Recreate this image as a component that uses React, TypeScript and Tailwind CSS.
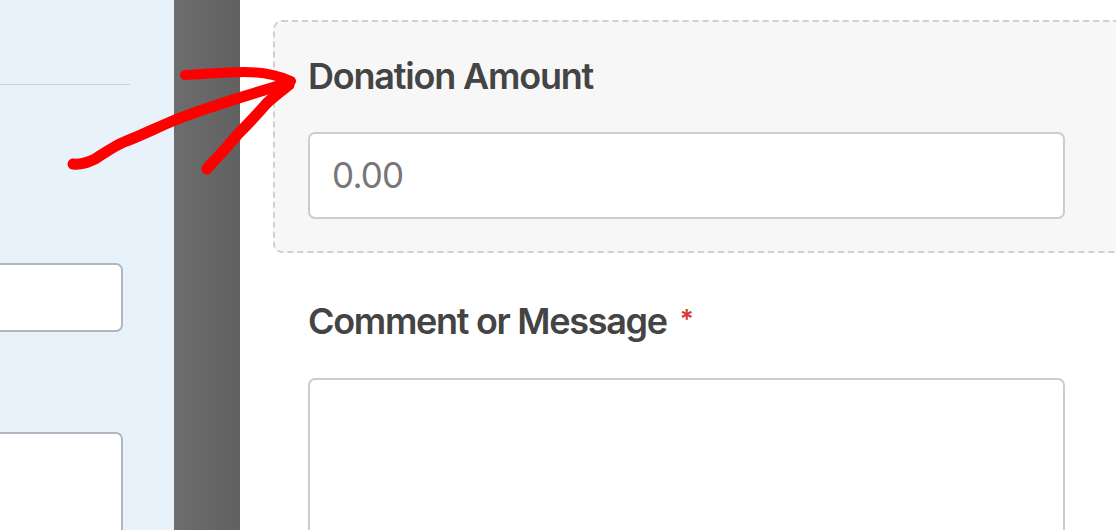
import React from "react";

export default function App() {
  return (
    <div className="relative flex h-[530px] w-[1116px] overflow-hidden bg-white" style={{ fontFamily: "Inter, 'Liberation Sans', sans-serif" }}>
      {/* left panel */}
      <div className="flex w-[174px] shrink-0 flex-col bg-[#e8f2fb]">
        <div className="mt-[84px] mr-[44px] h-px shrink-0 bg-[#c8d2dc]" />
        <div className="mt-[178px] ml-[-12px] mr-[51px] h-[69px] shrink-0 rounded-[7px] border-2 border-[#aeb7c2] bg-white" />
        <div className="mt-[100px] ml-[-12px] mr-[51px] h-[140px] shrink-0 rounded-[7px] border-2 border-[#aeb7c2] bg-white" />
      </div>
      {/* divider bar */}
      <div className="w-[66px] shrink-0 bg-gradient-to-r from-[#6d6d6d] to-[#616161]" />
      {/* right form */}
      <div className="flex flex-1 flex-col">
        <div className="ml-[33px] mt-[20px] w-[880px] shrink-0 rounded-[9px] border-2 border-dashed border-[#d0d0d0] bg-[#f7f7f7] pl-[33px] pt-[32px] pb-[32px]">
          <div className="text-[36px] font-semibold leading-[44px] tracking-[-1.2px] text-[#444444]">Donation Amount</div>
          <div className="mt-[34px] flex h-[87px] w-[757px] items-center rounded-[7px] border-2 border-[#cdcdcd] bg-white pl-[22px] text-[35px] tracking-[-0.8px] text-[#777777]">
            0.00
          </div>
        </div>
        <div className="ml-[68px] mt-[46px] flex shrink-0 items-start text-[36px] font-semibold leading-[44px] tracking-[-1.3px] text-[#444444]">
          Comment or Message
          <span className="ml-[13px] mt-[2px] text-[26px] leading-[36px] tracking-normal text-[#d63638]">*</span>
        </div>
        <div className="ml-[68px] mt-[35px] h-[200px] w-[757px] shrink-0 rounded-[7px] border-2 border-[#cdcdcd] bg-white" />
      </div>
      {/* red arrow annotation */}
      <svg className="pointer-events-none absolute left-0 top-0" width="1116" height="530" viewBox="0 0 1116 530">
        <g fill="none" stroke="#ff0000" strokeLinecap="round" strokeLinejoin="round">
          <path d="M73 164 C 82 165, 88 162, 95 159 C 105 153, 114 146, 124 142 C 140 136, 158 127, 175 120 C 198 111, 220 104, 242 97 C 258 92, 274 87, 289 83" strokeWidth="11" />
          <path d="M185 75 C 205 74, 225 72, 244 72 C 262 72, 277 75, 291 81" strokeWidth="10" />
          <path d="M289 85 C 280 92, 272 98, 266 104 C 255 117, 246 126, 238 134 C 230 144, 222 152, 215 160 C 211 164, 208 167, 207 169" strokeWidth="11" />
        </g>
      </svg>
    </div>
  );
}
